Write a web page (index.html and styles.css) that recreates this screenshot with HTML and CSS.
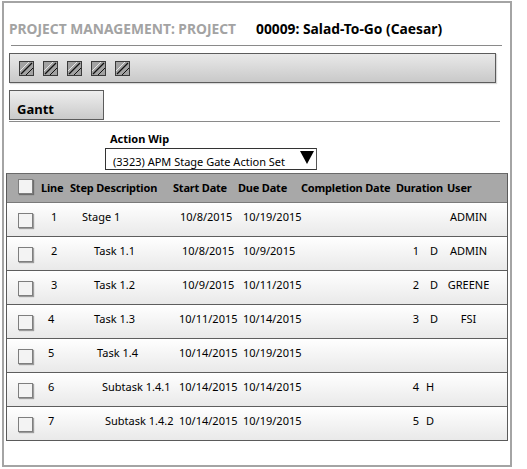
FILE: index.html
```html
<!DOCTYPE html>
<html>
<head>
<meta charset="utf-8">
<title>Project Management: Project</title>
<link rel="stylesheet" href="styles.css">
</head>
<body>

<div class="frame">
  <div class="title">
    <span class="module">PROJECT MANAGEMENT: PROJECT</span>
    <span class="record">00009: Salad-To-Go (Caesar)</span>
  </div>
  <div class="rule rule-top"></div>

  <div class="toolbar">
    <svg class="tool" width="15" height="15" viewBox="0 0 15 15"><rect x="0.5" y="0.5" width="14" height="14" fill="#a2a2a2" stroke="#3a3a3a"/><line x1="1" y1="10" x2="10" y2="1" stroke="#e6e6e6"/><line x1="2" y1="13" x2="13" y2="2" stroke="#111" stroke-width="1.3"/><line x1="7" y1="14" x2="14" y2="7" stroke="#111"/></svg>
    <svg class="tool" width="15" height="15" viewBox="0 0 15 15"><rect x="0.5" y="0.5" width="14" height="14" fill="#a2a2a2" stroke="#3a3a3a"/><line x1="1" y1="10" x2="10" y2="1" stroke="#e6e6e6"/><line x1="2" y1="13" x2="13" y2="2" stroke="#111" stroke-width="1.3"/><line x1="7" y1="14" x2="14" y2="7" stroke="#111"/></svg>
    <svg class="tool" width="15" height="15" viewBox="0 0 15 15"><rect x="0.5" y="0.5" width="14" height="14" fill="#a2a2a2" stroke="#3a3a3a"/><line x1="1" y1="10" x2="10" y2="1" stroke="#e6e6e6"/><line x1="2" y1="13" x2="13" y2="2" stroke="#111" stroke-width="1.3"/><line x1="7" y1="14" x2="14" y2="7" stroke="#111"/></svg>
    <svg class="tool" width="15" height="15" viewBox="0 0 15 15"><rect x="0.5" y="0.5" width="14" height="14" fill="#a2a2a2" stroke="#3a3a3a"/><line x1="1" y1="10" x2="10" y2="1" stroke="#e6e6e6"/><line x1="2" y1="13" x2="13" y2="2" stroke="#111" stroke-width="1.3"/><line x1="7" y1="14" x2="14" y2="7" stroke="#111"/></svg>
    <svg class="tool" width="15" height="15" viewBox="0 0 15 15"><rect x="0.5" y="0.5" width="14" height="14" fill="#a2a2a2" stroke="#3a3a3a"/><line x1="1" y1="10" x2="10" y2="1" stroke="#e6e6e6"/><line x1="2" y1="13" x2="13" y2="2" stroke="#111" stroke-width="1.3"/><line x1="7" y1="14" x2="14" y2="7" stroke="#111"/></svg>
  </div>

  <div class="tabs"><div class="tab">Gantt</div></div>
  <div class="rule rule-tabs"></div>

  <div class="action">
    <div class="action-label">Action Wip</div>
    <div class="select">(3323) APM Stage Gate Action Set<span class="caret"></span></div>
  </div>

  <div class="steps">
    <div class="row head">
      <div class="c-check"><span class="box"></span></div>
      <div class="c-line">Line</div>
      <div class="c-step">Step Description</div>
      <div class="c-start">Start Date</div>
      <div class="c-due">Due Date</div>
      <div class="c-done">Completion Date</div>
      <div class="c-dur">Duration</div>
      <div class="c-user">User</div>
    </div>

    <div class="row">
      <div class="c-check"><span class="box"></span></div>
      <div class="c-line">1</div>
      <div class="c-step lvl0">Stage 1</div>
      <div class="c-start">10/8/2015</div>
      <div class="c-due">10/19/2015</div>
      <div class="c-done"></div>
      <div class="c-dur"></div>
      <div class="c-user">ADMIN</div>
    </div>

    <div class="row">
      <div class="c-check"><span class="box"></span></div>
      <div class="c-line">2</div>
      <div class="c-step lvl1">Task 1.1</div>
      <div class="c-start s2">10/8/2015</div>
      <div class="c-due">10/9/2015</div>
      <div class="c-done"></div>
      <div class="c-dur"><span class="num">1</span><span class="unit">D</span></div>
      <div class="c-user">ADMIN</div>
    </div>

    <div class="row">
      <div class="c-check"><span class="box"></span></div>
      <div class="c-line">3</div>
      <div class="c-step lvl1">Task 1.2</div>
      <div class="c-start s2">10/9/2015</div>
      <div class="c-due">10/11/2015</div>
      <div class="c-done"></div>
      <div class="c-dur"><span class="num">2</span><span class="unit">D</span></div>
      <div class="c-user">GREENE</div>
    </div>

    <div class="row">
      <div class="c-check"><span class="box"></span></div>
      <div class="c-line late">4</div>
      <div class="c-step lvl1">Task 1.3</div>
      <div class="c-start s1">10/11/2015</div>
      <div class="c-due">10/14/2015</div>
      <div class="c-done"></div>
      <div class="c-dur"><span class="num">3</span><span class="unit">D</span></div>
      <div class="c-user">FSI</div>
    </div>

    <div class="row">
      <div class="c-check"><span class="box"></span></div>
      <div class="c-line late">5</div>
      <div class="c-step lvl1b">Task 1.4</div>
      <div class="c-start s1">10/14/2015</div>
      <div class="c-due">10/19/2015</div>
      <div class="c-done"></div>
      <div class="c-dur"></div>
      <div class="c-user"></div>
    </div>

    <div class="row">
      <div class="c-check"><span class="box"></span></div>
      <div class="c-line late">6</div>
      <div class="c-step lvl2">Subtask 1.4.1</div>
      <div class="c-start s1">10/14/2015</div>
      <div class="c-due">10/14/2015</div>
      <div class="c-done"></div>
      <div class="c-dur"><span class="num">4</span><span class="unit hrs">H</span></div>
      <div class="c-user"></div>
    </div>

    <div class="row">
      <div class="c-check"><span class="box"></span></div>
      <div class="c-line late">7</div>
      <div class="c-step lvl2b">Subtask 1.4.2</div>
      <div class="c-start s1">10/14/2015</div>
      <div class="c-due">10/19/2015</div>
      <div class="c-done"></div>
      <div class="c-dur"><span class="num">5</span><span class="unit hrs">D</span></div>
      <div class="c-user"></div>
    </div>
  </div>
</div>

</body>
</html>
```

FILE: styles.css
```css
body, html {
	margin: 0;
	padding: 0;
	background: #fff;
	color: #000;
	font-family: "Noto Sans", "Open Sans", sans-serif;
	font-size: 11px;
}

.frame {
	margin: 1px 0 0 2px;
	width: 506px;
	height: 462px;
	border: 2px solid #a4a4a4;
}

/* header line */
.title {
	display: flex;
	gap: 20px;
	margin: 17px 0 0 5px;
	height: 18px;
	line-height: 18px;
	font-size: 13.8px;
	font-weight: bold;
}
.module { color: #a3a3a3; }
.record { color: #000; }

.rule {
	height: 0;
	border-top: 1px solid #8a8a8a;
}
.rule-top {
	margin: 7px 0 0 7px;
	width: 491px;
}
.rule-tabs {
	margin: 1px 0 0 5px;
	width: 491px;
}

/* toolbar strip */
.toolbar {
	display: flex;
	align-items: center;
	gap: 9px;
	box-sizing: border-box;
	margin: 7px 0 0 5px;
	width: 487px;
	height: 30px;
	padding-left: 9px;
	border: 1px solid #5c5c5c;
	background: linear-gradient(#e9e9e9, #c9c9c9);
	box-shadow: 1px 1px 1px rgba(0, 0, 0, .15);
}
.tool { display: block; }

.tabs {
	margin: 7px 0 0 5px;
}
.tab {
	box-sizing: border-box;
	width: 95px;
	height: 30px;
	padding: 9px 0 0 7px;
	border: 1px solid #5c5c5c;
	background: linear-gradient(#eeeeee, #cacaca);
	font-size: 13px;
	font-weight: bold;
	line-height: 18px;
}

/* action set picker */
.action {
	margin: 9px 0 0 101px;
}
.action-label {
	margin-left: 5px;
	font-weight: bold;
	line-height: 16px;
}
.select {
	position: relative;
	box-sizing: border-box;
	margin-top: 1px;
	width: 212px;
	height: 22px;
	padding: 5px 0 0 7px;
	border: 1px solid #333;
	border-right-color: #555;
	line-height: 15px;
	background: #fff;
}
.caret {
	position: absolute;
	right: 2px;
	top: 2px;
	width: 0;
	height: 0;
	border-left: 7px solid transparent;
	border-right: 7px solid transparent;
	border-top: 13px solid #000;
}

/* step grid */
.steps {
	margin: 3px 0 0 2px;
	width: 500px;
	border: 1px solid #5a5a5a;
	border-top: 1px solid #6a6a6a;
}
.row {
	display: grid;
	grid-template-columns: 30px 31px 103px 65px 63px 95px 51px 1fr;
	box-sizing: border-box;
	height: 34px;
	border-bottom: 1px solid #5e5e5e;
	background: linear-gradient(#ffffff, #e9e9e9);
	line-height: 16px;
	white-space: nowrap;
}
.row > div { padding-top: 6px; }
.row:last-child { border-bottom: 0; height: 33px; }

.head {
	height: 29px;
	background: #a8a8a8;
	border-bottom: 1px solid #7a7a7a;
	font-weight: bold;
	letter-spacing: -0.2px;
}
.head > div { padding-top: 6px; }
.head .c-line { padding-left: 4px; }
.head .c-step,
.head .c-start,
.head .c-due,
.head .c-done,
.head .c-dur,
.head .c-user { padding-left: 2px; text-align: left; }
.head .c-check .box { margin-top: -1px; }

.c-check { padding-left: 11px; }
.box {
	display: block;
	box-sizing: border-box;
	width: 15px;
	height: 15px;
	margin-top: 4px;
	border: 1px solid #7e7e7e;
	background: #f3f3f3;
	box-shadow: 1px 1px 1px rgba(0, 0, 0, .35);
}

.c-line { padding-left: 14px; }
.c-line.late { padding-left: 11px; }

.c-step.lvl0 { padding-left: 14px; }
.c-step.lvl1 { padding-left: 26px; }
.c-step.lvl1b { padding-left: 29px; }
.c-step.lvl2 { padding-left: 34px; }
.c-step.lvl2b { padding-left: 37px; }

.c-start { padding-left: 9px; }
.c-start.s2 { padding-left: 11px; }
.c-start.s1 { padding-left: 8px; }
.c-due { padding-left: 7px; }

.c-dur { display: flex; padding-left: 17px; }
.c-dur .num { width: 8px; text-align: right; }
.c-dur .unit { margin-left: 11px; }
.c-dur .unit.hrs { margin-left: 7px; }

.c-user { width: 47px; text-align: center; }
```
